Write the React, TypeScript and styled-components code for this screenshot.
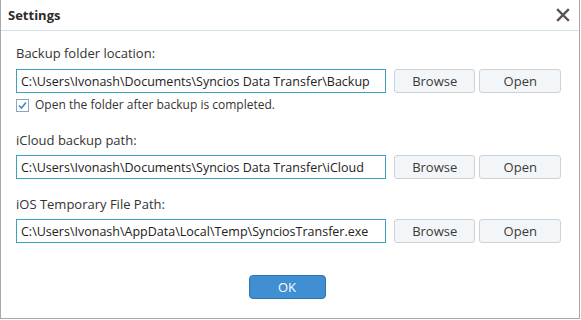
import React, { useState } from 'react';
import styled, { createGlobalStyle } from 'styled-components';

const GlobalStyle = createGlobalStyle`
  body {
    margin: 0;
    background: #ffffff;
    font-family: "Open Sans", "DejaVu Sans", sans-serif;
  }
`;

const Dialog = styled.div`
  width: 580px;
  height: 319px;
  box-sizing: border-box;
  border: 1px solid #a9a9a9;
  border-top: none;
  background: #ffffff;
  display: flex;
  flex-direction: column;
`;

const Header = styled.div`
  height: 30px;
  display: flex;
  align-items: center;
  justify-content: space-between;
  padding: 0 8px 0 7px;
  border-bottom: 1px solid #d3e1e8;
`;

const Title = styled.h1`
  margin: 0;
  font-size: 13px;
  font-weight: 700;
  color: #2b2b2b;
`;

const CloseButton = styled.button`
  border: none;
  background: none;
  padding: 0;
  width: 16px;
  height: 16px;
  display: flex;
  align-items: center;
  justify-content: center;
  cursor: pointer;
`;

const Body = styled.div`
  flex: 1;
  padding: 14px 18px 0 15px;
  display: flex;
  flex-direction: column;
`;

const Section = styled.div<{ gapAfter?: number }>`
  display: flex;
  flex-direction: column;
  gap: 7px;
  margin-bottom: ${p => p.gapAfter ?? 0}px;
`;

const Label = styled.div`
  font-size: 13px;
  line-height: 16px;
  color: #333333;
`;

const Row = styled.div`
  display: flex;
  align-items: center;
`;

const PathInput = styled.input`
  width: 372px;
  height: 24px;
  box-sizing: border-box;
  border: 1px solid #3aa2c0;
  padding: 0 4px;
  font-family: inherit;
  font-size: 12.5px;
  color: #222222;
  outline: none;
  margin-right: 8px;
`;

const Button = styled.button<{ spaced?: boolean }>`
  width: 82px;
  height: 24px;
  box-sizing: border-box;
  border: 1px solid #cdd2d6;
  border-radius: 3px;
  background: #f3f6f9;
  font-family: inherit;
  font-size: 13px;
  color: #3a3a3a;
  margin-left: ${p => (p.spaced ? 4 : 0)}px;
  padding: 0;
`;

const CheckRow = styled.label`
  display: flex;
  align-items: center;
  gap: 6px;
  margin: 4px 0 19px;
  font-size: 12px;
  line-height: 16px;
  color: #333333;
`;

const CheckBox = styled.span`
  width: 13px;
  height: 13px;
  box-sizing: border-box;
  border: 1px solid #8ea6bb;
  background: #ffffff;
  display: flex;
  align-items: center;
  justify-content: center;
`;

const Footer = styled.div`
  display: flex;
  justify-content: center;
  padding-right: 3px;
`;

const OkButton = styled.button`
  width: 77px;
  height: 24px;
  border: 1px solid #2f73ad;
  border-radius: 4px;
  background: #3f8fd2;
  color: #ffffff;
  font-family: inherit;
  font-size: 13px;
  padding: 0;
`;

const paths = [
  { label: 'Backup folder location:', value: 'C:\\Users\\Ivonash\\Documents\\Syncios Data Transfer\\Backup' },
  { label: 'iCloud backup path:', value: 'C:\\Users\\Ivonash\\Documents\\Syncios Data Transfer\\iCloud' },
  { label: 'iOS Temporary File Path:', value: 'C:\\Users\\Ivonash\\AppData\\Local\\Temp\\SynciosTransfer.exe' },
];

const PathRow: React.FC<{ value: string }> = ({ value }) => (
  <Row>
    <PathInput readOnly value={value} />
    <Button>Browse</Button>
    <Button spaced>Open</Button>
  </Row>
);

export default function App() {
  const [openAfter] = useState(true);

  return (
    <>
      <GlobalStyle />
      <Dialog>
        <Header>
          <Title>Settings</Title>
          <CloseButton aria-label="Close">
            <svg width="14" height="14" viewBox="0 0 14 14">
              <path d="M2 2 L12 12 M12 2 L2 12" stroke="#555" strokeWidth="2.4" strokeLinecap="square" />
            </svg>
          </CloseButton>
        </Header>
        <Body>
          <Section style={{ gap: 8 }}>
            <Label>{paths[0].label}</Label>
            <PathRow value={paths[0].value} />
          </Section>
          <CheckRow>
            <CheckBox>
              {openAfter && (
                <svg width="9" height="9" viewBox="0 0 9 9">
                  <path d="M1 4.5 L3.5 7 L8 1.5" stroke="#3a8bd4" strokeWidth="1.6" fill="none" />
                </svg>
              )}
            </CheckBox>
            Open the folder after backup is completed.
          </CheckRow>
          <Section gapAfter={17}>
            <Label>{paths[1].label}</Label>
            <PathRow value={paths[1].value} />
          </Section>
          <Section gapAfter={32}>
            <Label>{paths[2].label}</Label>
            <PathRow value={paths[2].value} />
          </Section>
          <Footer>
            <OkButton>OK</OkButton>
          </Footer>
        </Body>
      </Dialog>
    </>
  );
}
